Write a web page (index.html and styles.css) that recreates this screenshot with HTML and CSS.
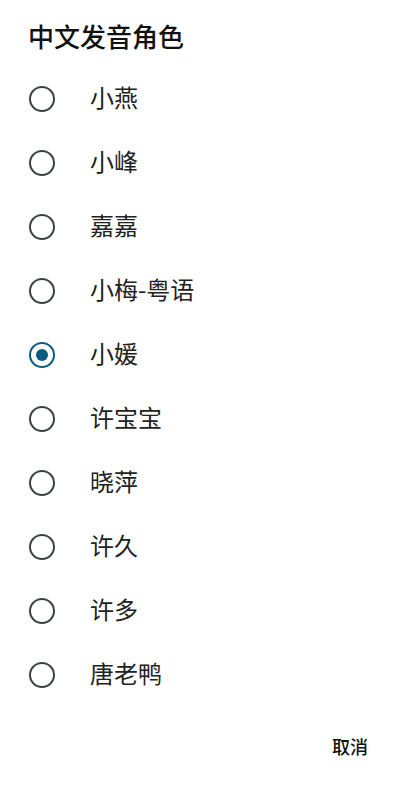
FILE: index.html
```
<!DOCTYPE html>
<html lang="zh">
<head>
<meta charset="utf-8">
<link rel="stylesheet" href="styles.css">
</head>
<body>
<div class="dialog">
  <h1 class="title">中文发音角色</h1>
  <ul class="list">
    <li class="row"><span class="radio"></span><span class="label">小燕</span></li>
    <li class="row"><span class="radio"></span><span class="label">小峰</span></li>
    <li class="row"><span class="radio"></span><span class="label">嘉嘉</span></li>
    <li class="row"><span class="radio"></span><span class="label">小梅-粤语</span></li>
    <li class="row"><span class="radio checked"></span><span class="label">小媛</span></li>
    <li class="row"><span class="radio"></span><span class="label">许宝宝</span></li>
    <li class="row"><span class="radio"></span><span class="label">晓萍</span></li>
    <li class="row"><span class="radio"></span><span class="label">许久</span></li>
    <li class="row"><span class="radio"></span><span class="label">许多</span></li>
    <li class="row"><span class="radio"></span><span class="label">唐老鸭</span></li>
  </ul>
  <div class="actions"><button class="btn">取消</button></div>
</div>
</body>
</html>
```
FILE: styles.css
```
html, body { margin: 0; padding: 0; background: #fff; }
body { font-family: "Noto Sans CJK SC", "Noto Sans", sans-serif; color: #1a1a1a; }
.dialog { width: 400px; height: 785px; display: flex; flex-direction: column; }
.title {
  margin: 0;
  padding: 20px 0 0 28px;
  font-size: 26px;
  line-height: 32px;
  font-weight: 500;
  color: #111;
}
.list { list-style: none; margin: 0; padding: 15px 0 0 0; }
.row { height: 64px; display: flex; align-items: center; }
.radio {
  box-sizing: border-box;
  width: 26px; height: 26px;
  margin-left: 29px;
  border: 2.5px solid #3c4146;
  border-radius: 50%;
  display: flex; align-items: center; justify-content: center;
  flex: none;
}
.radio.checked { border-color: #0b5d80; }
.radio.checked::after {
  content: "";
  width: 12px; height: 12px;
  border-radius: 50%;
  background: #0b5d80;
}
.label {
  margin-left: 35px;
  margin-bottom: 5px;
  font-size: 24px;
  line-height: 30px;
  font-weight: 400;
  color: #222;
}
.actions { display: flex; justify-content: flex-end; padding: 19px 24px 0 0; }
.btn {
  border: none; background: none;
  font-family: inherit;
  font-size: 18px;
  font-weight: 500;
  color: #111;
  padding: 8px 8px;
  line-height: 24px;
}
```
